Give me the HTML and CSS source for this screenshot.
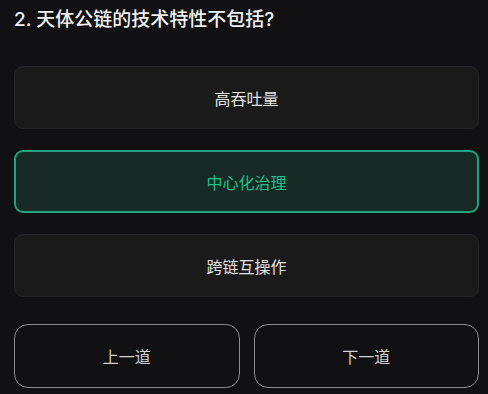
FILE: index.html
```html
<!DOCTYPE html>
<html lang="zh-CN">
<head>
<meta charset="utf-8">
<link rel="stylesheet" href="styles.css">
</head>
<body>
<div class="page">
  <h2 class="question">2. 天体公链的技术特性不包括?</h2>
  <div class="options">
    <div class="option">高吞吐量</div>
    <div class="option selected">中心化治理</div>
    <div class="option">跨链互操作</div>
  </div>
  <div class="nav">
    <div class="btn">上一道</div>
    <div class="btn">下一道</div>
  </div>
</div>
</body>
</html>
```
FILE: styles.css
```css
html, body {
  margin: 0;
  padding: 0;
  background: #111113;
  font-family: Inter, "Noto Sans CJK SC", sans-serif;
  color: #ededed;
}
.page {
  padding: 7px 9px 0 14px;
  display: flex;
  flex-direction: column;
}
.question {
  margin: 0;
  font-size: 19px;
  line-height: 26px;
  font-weight: 500;
  color: #f0f0f0;
}
.options {
  margin-top: 33px;
  display: flex;
  flex-direction: column;
  gap: 21px;
}
.option {
  height: 63px;
  box-sizing: border-box;
  border: 1.5px solid #262626;
  background: #1a1a1a;
  border-radius: 9px;
  display: flex;
  align-items: center;
  justify-content: center;
  font-size: 16px;
  color: #e2e2e2;
}
.option.selected {
  border: 2px solid #1fa37f;
  background: #172a25;
  color: #1fc18c;
}
.nav {
  margin-top: 27px;
  display: flex;
  gap: 14px;
}
.btn {
  flex: 1;
  height: 64px;
  box-sizing: border-box;
  border: 1.5px solid #8c8c8c;
  border-radius: 14px;
  display: flex;
  align-items: center;
  justify-content: center;
  font-size: 16px;
  color: #d0d0d0;
}
```
